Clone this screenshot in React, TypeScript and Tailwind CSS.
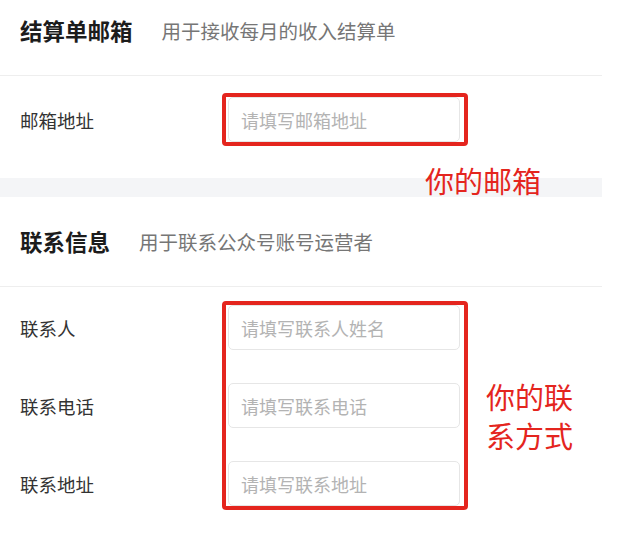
const fields = [
  { label: "联系人", placeholder: "请填写联系人姓名" },
  { label: "联系电话", placeholder: "请填写联系电话" },
  { label: "联系地址", placeholder: "请填写联系地址" },
];

const Header = ({ title, desc }: { title: string; desc: string }) => (
  <div className="flex items-center px-5 border-b border-[#eeeeee]">
    <h2 className="text-[22.5px] font-bold text-[#1c1c1c] leading-none">{title}</h2>
    <span className="ml-[29px] text-[19.5px] text-[#767676] leading-none">{desc}</span>
  </div>
);

const Field = ({ label, placeholder }: { label: string; placeholder: string }) => (
  <div className="flex items-center">
    <label className="w-[208px] text-[18.5px] text-[#333333] pt-[3px]">{label}</label>
    <input
      type="text"
      placeholder={placeholder}
      className="w-[232px] h-[45px] px-3 rounded-[5px] border border-[#e6e6e6] bg-white text-[18px] outline-none placeholder:text-[#b3b3b3]"
    />
  </div>
);

export default function App() {
  return (
    <div className="relative w-[635px] h-[547px] bg-white font-['Noto_Sans_CJK_SC','Liberation_Sans',sans-serif]">
      <div className="w-[602px]">
        <section>
          <div className="h-[76px] flex flex-col [&>div]:h-full [&>div]:pb-[14px]">
            <Header title="结算单邮箱" desc="用于接收每月的收入结算单" />
          </div>
          <div className="h-[102px] px-5 pt-[21px]">
            <Field label="邮箱地址" placeholder="请填写邮箱地址" />
          </div>
        </section>

        <div className="h-[19px] bg-[#f4f5f7]" />

        <section>
          <div className="h-[90px] flex flex-col [&>div]:h-full">
            <Header title="联系信息" desc="用于联系公众号账号运营者" />
          </div>
          <div className="px-5 pt-[18px] flex flex-col gap-[33px]">
            {fields.map((f) => (
              <Field key={f.label} label={f.label} placeholder={f.placeholder} />
            ))}
          </div>
        </section>
      </div>

      {/* red annotations drawn over the form */}
      <div className="absolute left-[222px] top-[93px] w-[246px] h-[53px] border-4 border-[#e4251e] rounded-[4px] pointer-events-none" />
      <div className="absolute left-[222px] top-[301px] w-[246px] h-[209px] border-4 border-[#e4251e] rounded-[4px] pointer-events-none" />
      <div className="absolute left-[425px] top-[166px] text-[29px] leading-none text-[#e4251e]">你的邮箱</div>
      <div className="absolute left-[486px] top-[377px] text-[29px] leading-[39px] text-[#e4251e]">
        你的联<br />系方式
      </div>
    </div>
  );
}
